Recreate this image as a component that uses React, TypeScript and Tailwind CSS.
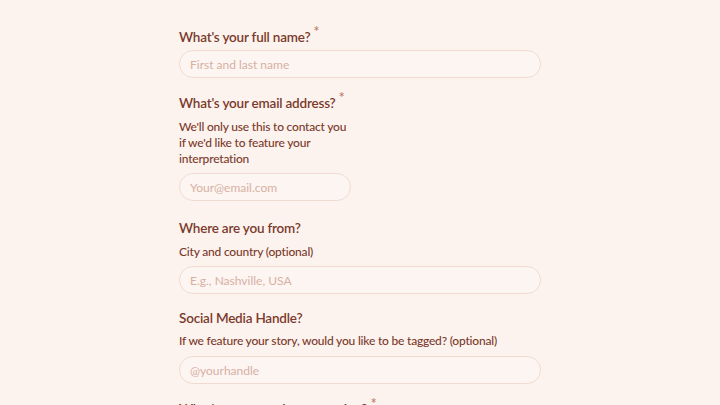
import React from 'react'

const ink = 'text-[#7a3a2c]'

function Label({ children, required }: { children: React.ReactNode; required?: boolean }) {
  return (
    <div className={`text-[13.5px] leading-5 font-semibold tracking-[-0.2px] ${ink}`}>
      {children}
      {required && <span className="relative -top-[5px] ml-[3px] text-[15px] font-normal text-[#b9755f]">*</span>}
    </div>
  )
}

function Field({ placeholder, className = 'w-full' }: { placeholder: string; className?: string }) {
  return (
    <input
      type="text"
      placeholder={placeholder}
      className={`${className} h-[28px] rounded-full border border-[#f1dbd1] bg-[#fdf5f1] px-[10px] text-[12px] text-[#7a3a2c] outline-none placeholder:text-[#d7b0a4]`}
    />
  )
}

function Hint({ children, className = '' }: { children: React.ReactNode; className?: string }) {
  return <p className={`text-[12px] leading-4 font-medium tracking-[-0.2px] ${ink} ${className}`}>{children}</p>
}

export default function App() {
  return (
    <div
      className="bg-[#fdf3ee] overflow-hidden h-[405px]"
      style={{ fontFamily: 'Lato, "Noto Sans", sans-serif' }}
    >
      <form className="mx-auto w-[362px] pt-[26px] flex flex-col gap-[14px]">
        <section className="flex flex-col gap-[3px]">
          <Label required>What's your full name?</Label>
          <Field placeholder="First and last name" />
        </section>

        <section className="flex flex-col">
          <Label required>What's your email address?</Label>
          <Hint className="mt-[6px] mb-[6px] w-[172px]">
            We'll only use this to contact you if we'd like to feature your interpretation
          </Hint>
          <Field placeholder="Your@email.com" className="w-[172px]" />
        </section>

        <section className="flex flex-col mt-[3px]">
          <Label>Where are you from?</Label>
          <Hint className="mt-[6px] mb-[6px]">City and country (optional)</Hint>
          <Field placeholder="E.g., Nashville, USA" />
        </section>

        <section className="flex flex-col">
          <Label>Social Media Handle?</Label>
          <Hint className="mt-[5px] mb-[7px]">If we feature your story, would you like to be tagged? (optional)</Hint>
          <Field placeholder="@yourhandle" />
        </section>

        <section className="flex flex-col">
          <Label required>What's your song interpretation?</Label>
        </section>
      </form>
    </div>
  )
}
